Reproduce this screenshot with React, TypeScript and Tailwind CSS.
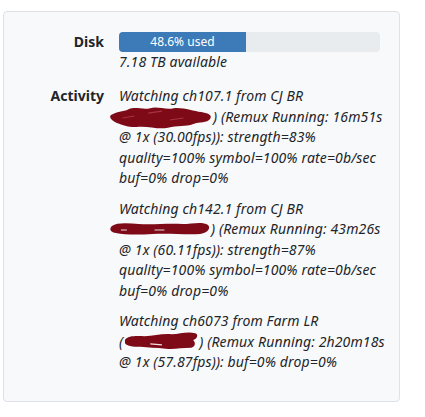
const entries = [
  {
    title: "Watching ch107.1 from CJ BR",
    redact: "a",
    tail: ") (Remux Running: 16m51s",
    rest: ["@ 1x (30.00fps)): strength=83%", "quality=100% symbol=100% rate=0b/sec", "buf=0% drop=0%"],
  },
  {
    title: "Watching ch142.1 from CJ BR",
    redact: "b",
    tail: ") (Remux Running: 43m26s",
    rest: ["@ 1x (60.11fps)): strength=87%", "quality=100% symbol=100% rate=0b/sec", "buf=0% drop=0%"],
  },
  {
    title: "Watching ch6073 from Farm LR",
    redact: "c",
    tail: ") (Remux Running: 2h20m18s",
    rest: ["@ 1x (57.87fps)): buf=0% drop=0%"],
  },
];

// scribbled-out address, drawn over the line without changing its height
const Redaction = ({ kind }: { kind: string }) => {
  if (kind === "a")
    return (
      <span className="relative inline-block w-[104px] h-[14px] -ml-[10px]">
        <svg width="104" height="26" viewBox="0 0 106 26" className="absolute left-0 -top-[3px]">
          <path
            d="M2 10 C8 6 14 7 20 4 C28 1 34 5 42 3 C50 1 58 5 66 3 C76 2 86 6 94 7 C100 8 106 10 103 14 C100 18 92 17 86 19 C78 22 70 20 60 23 C50 25 40 21 30 22 C22 23 12 20 6 17 C2 15 0 12 2 10 Z"
            fill="#7d0a16"
          />
          <path d="M14 13 L26 11 M40 8 L54 6 M62 15 L76 13" stroke="#a8333f" strokeWidth="1.2" />
        </svg>
      </span>
    );
  if (kind === "b")
    return (
      <span className="relative inline-block w-[102px] h-[14px] -ml-[10px]">
        <svg width="101" height="16" viewBox="0 0 102 16" className="absolute left-0 top-[0px]">
          <path
            d="M3 6 C8 2 20 3 30 4 C44 5 60 3 74 4 C84 4 94 1 100 5 C103 8 100 13 92 14 C78 15 60 13 44 14 C30 15 16 15 7 13 C1 12 0 9 3 6 Z"
            fill="#7d0a16"
          />
          <path d="M12 10 L18 10 M46 10 L56 10" stroke="#e8d8da" strokeWidth="1.2" />
        </svg>
      </span>
    );
  return (
    <span className="relative inline-block w-[76px] h-[14px]">
      <svg width="76" height="20" viewBox="0 0 78 20" className="absolute left-0 -top-[2px]">
        <path
          d="M2 9 C5 4 14 5 22 5 C32 5 40 2 50 3 C58 3 66 0 74 2 C78 3 76 8 72 9 C75 12 74 16 70 17 C60 17 52 19 44 18 C34 17 26 17 18 16 C10 16 3 15 2 12 Z"
          fill="#7d0a16"
        />
        <path d="M28 13 L40 14" stroke="#f0e0e2" strokeWidth="1.2" />
      </svg>
    </span>
  );
};

export default function App() {
  return (
    <div className="w-[425px] h-[417px] bg-white pt-[11px] pl-[3px]" style={{ fontFamily: '"Noto Sans", "Open Sans", sans-serif' }}>
      <div className="w-[397px] h-[391px] bg-[#f8f9fa] border border-[#dee2e6] rounded-[4px] pt-[20px] text-[#212529]">
        <div className="grid grid-cols-[100px_1fr] gap-x-[15px] gap-y-[14px] text-[14px] leading-[20.4px]">
          <div className="text-right font-bold">Disk</div>
          <div className="pr-[19px]">
            <div className="h-[20px] bg-[#e9ecef] rounded-[4px] overflow-hidden flex">
              <div className="w-[48.6%] bg-[#3c7ab8] text-white text-[12px] leading-[20px] text-center">48.6% used</div>
            </div>
            <div className="italic tracking-[0.14px]">7.18 TB available</div>
          </div>
          <div className="text-right font-bold">Activity</div>
          <div className="italic tracking-[0.14px] flex flex-col gap-[10.5px]">
            {entries.map((e) => (
              <div key={e.title}>
                <div>{e.title}</div>
                <div className="whitespace-nowrap">
                  {e.redact === "c" ? "(" : ""}
                  <Redaction kind={e.redact} />
                  {e.tail}
                </div>
                {e.rest.map((r) => (
                  <div key={r} className="whitespace-nowrap">{r}</div>
                ))}
              </div>
            ))}
          </div>
        </div>
      </div>
    </div>
  );
}
